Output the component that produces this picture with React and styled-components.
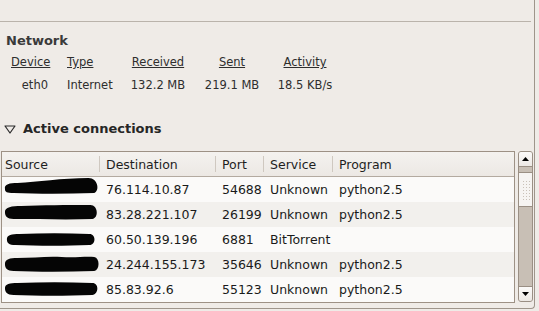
import React from "react";
import styled, { createGlobalStyle } from "styled-components";

const Global = createGlobalStyle`
  html, body { margin: 0; padding: 0; background: #efebe7; }
  body { font-family: "DejaVu Sans", "Noto Sans", sans-serif; color: #1e1e1e; }
`;

const Frame = styled.div`
  width: 535px;
  height: 309px;
  box-sizing: border-box;
  border-right: 1px solid #9e958b;
  border-bottom: 1px solid #9e958b;
  border-bottom-right-radius: 4px;
  display: flex;
  flex-direction: column;
  overflow: hidden;
`;

const Spacer = styled.div`
  height: 21px;
  flex: none;
`;

const Separator = styled.div`
  height: 1px;
  flex: none;
  background: #bab3ab;
  margin-right: 3px;
`;

const Title = styled.div`
  font-size: 13px;
  line-height: 16px;
  font-weight: bold;
  color: #3a3a3a;
  margin: ${(p) => p.$top}px 0 0 6px;
`;

const StatGrid = styled.div`
  display: grid;
  grid-template-columns: 37px 44px 56px 54px 54px;
  column-gap: 19px;
  row-gap: 9px;
  margin: 6px 0 0 11px;
  font-size: 11.5px;
  line-height: 14px;
  color: #2e2e2e;
`;

const StatHead = styled.span`
  text-decoration: underline;
  white-space: nowrap;
  justify-self: ${(p) => p.$align || "center"};
`;

const StatVal = styled.span`
  white-space: nowrap;
  justify-self: ${(p) => p.$align || "center"};
`;

const Expander = styled.div`
  display: flex;
  align-items: center;
  gap: 7px;
  margin: 29px 0 0 4px;
  font-size: 13px;
  line-height: 16px;
  font-weight: bold;
  color: #262626;
`;

const ListArea = styled.div`
  display: flex;
  margin: 14px 0 0 1px;
  gap: 3px;
  height: 152px;
`;

const Tree = styled.div`
  width: 514px;
  box-sizing: border-box;
  border: 1px solid #9d9185;
  background: #faf9f8;
  display: flex;
  flex-direction: column;
`;

const cols = "98px 116px 48px 69px 1fr";

const HeaderRow = styled.div`
  display: grid;
  grid-template-columns: ${cols};
  height: 24px;
  border-bottom: 1px solid #b3aaa0;
  background: linear-gradient(#f4f2ef, #ece8e4);
  font-size: 12.5px;
  color: #1e1e1e;
`;

const HeadCell = styled.div`
  display: flex;
  align-items: center;
  padding-top: 1px;
  padding-left: ${(p) => (p.$first ? 3 : 6)}px;
  position: relative;
  white-space: nowrap;
  ${(p) =>
    p.$divider
      ? `&::after {
    content: "";
    position: absolute;
    right: 0;
    top: 4px;
    bottom: 4px;
    width: 1px;
    background: #cfc8c0;
  }`
      : ""}
`;

const Row = styled.div`
  display: grid;
  grid-template-columns: ${cols};
  height: 25px;
  background: ${(p) => (p.$odd ? "#f2f0ed" : "#fbfaf9")};
  font-size: 12.5px;
  color: #1a1a1a;
`;

const Cell = styled.div`
  display: flex;
  align-items: center;
  padding-left: 6px;
  white-space: nowrap;
  overflow: hidden;
`;

const SourceCell = styled.div`
  padding-left: 2px;
  display: flex;
`;

const Scrollbar = styled.div`
  width: 15px;
  height: 151px;
  box-sizing: border-box;
  border: 1px solid #9a8f84;
  border-radius: 3px;
  background: #c8bfb5;
  display: flex;
  flex-direction: column;
  overflow: hidden;
`;

const ArrowButton = styled.div`
  height: 14px;
  flex: none;
  background: linear-gradient(#fbfaf9, #ece8e4);
  display: flex;
  align-items: center;
  justify-content: center;
  ${(p) => (p.$down ? "border-top: 1px solid #9a8f84;" : "border-bottom: 1px solid #9a8f84;")}
`;

const TroughGap = styled.div`
  height: ${(p) => p.$h}px;
  flex: ${(p) => (p.$grow ? 1 : "none")};
`;

const Thumb = styled.div`
  height: 35px;
  flex: none;
  box-sizing: border-box;
  border-top: 1px solid #9a8f84;
  border-bottom: 1px solid #9a8f84;
  background: #f6f4f2;
  display: flex;
  align-items: center;
  justify-content: center;
`;

const Grip = styled.div`
  width: 8px;
  height: 20px;
  background-image: radial-gradient(circle, #c9c1b8 0.8px, transparent 1px);
  background-size: 3px 3px;
`;

const Arrow = ({ down }) => (
  <svg width="7" height="4" viewBox="0 0 7 4">
    <polygon points={down ? "0,0 7,0 3.5,4" : "0,4 7,4 3.5,0"} fill="#000" />
  </svg>
);

const blobs = [
  "M1 12 C0 7, 6 6, 14 6 C35 5, 60 1, 88 1 C98 1, 100 14, 94 16 C65 17, 35 17, 10 16 C3 16, 1 15, 1 12 Z",
  "M1 10 C1 5, 8 4, 18 4 C40 3, 65 3, 90 3 C98 3, 99 16, 92 17 C65 18, 35 17, 10 17 C3 17, 1 14, 1 10 Z",
  "M3 12 C3 8, 8 7, 16 7 C40 6, 65 6, 89 7 C96 7, 96 18, 89 18 C65 19, 35 19, 12 18 C5 18, 3 16, 3 12 Z",
  "M1 12 C1 7, 6 6, 14 6 C30 6, 45 4, 60 5 C75 6, 85 4, 94 5 C100 6, 100 18, 94 19 C65 20, 35 20, 10 19 C3 19, 1 16, 1 12 Z",
  "M1 11 C1 7, 6 6, 14 6 C40 5, 65 5, 92 6 C99 6, 99 17, 92 18 C65 19, 35 19, 10 18 C3 18, 1 15, 1 11 Z",
];

const Redaction = ({ d }) => (
  <svg width="97" height="25" viewBox="0 0 100 25" preserveAspectRatio="none">
    <path d={d} fill="#050505" />
  </svg>
);

const rows = [
  ["76.114.10.87", "54688", "Unknown", "python2.5"],
  ["83.28.221.107", "26199", "Unknown", "python2.5"],
  ["60.50.139.196", "6881", "BitTorrent", ""],
  ["24.244.155.173", "35646", "Unknown", "python2.5"],
  ["85.83.92.6", "55123", "Unknown", "python2.5"],
];

export default function App() {
  return (
    <>
      <Global />
      <Frame>
        <Spacer />
        <Separator />
        <Title $top={11}>Network</Title>
        <StatGrid>
          <StatHead $align="start">Device</StatHead>
          <StatHead $align="start">Type</StatHead>
          <StatHead>Received</StatHead>
          <StatHead>Sent</StatHead>
          <StatHead>Activity</StatHead>
          <StatVal $align="end">eth0</StatVal>
          <StatVal $align="start">Internet</StatVal>
          <StatVal>132.2 MB</StatVal>
          <StatVal>219.1 MB</StatVal>
          <StatVal>18.5 KB/s</StatVal>
        </StatGrid>
        <Expander>
          <svg width="12" height="9" viewBox="0 0 12 9">
            <polygon points="1,1 11,1 6,8" fill="none" stroke="#2a2a2a" strokeWidth="1.2" strokeLinejoin="round" />
          </svg>
          Active connections
        </Expander>
        <ListArea>
          <Tree>
            <HeaderRow>
              <HeadCell $first $divider>Source</HeadCell>
              <HeadCell $divider>Destination</HeadCell>
              <HeadCell $divider>Port</HeadCell>
              <HeadCell $divider>Service</HeadCell>
              <HeadCell>Program</HeadCell>
            </HeaderRow>
            {rows.map((r, i) => (
              <Row key={i} $odd={i % 2 === 1}>
                <SourceCell>
                  <Redaction d={blobs[i]} />
                </SourceCell>
                <Cell>{r[0]}</Cell>
                <Cell>{r[1]}</Cell>
                <Cell>{r[2]}</Cell>
                <Cell>{r[3]}</Cell>
              </Row>
            ))}
          </Tree>
          <Scrollbar>
            <ArrowButton>
              <Arrow />
            </ArrowButton>
            <TroughGap $h={5} />
            <Thumb>
              <Grip />
            </Thumb>
            <TroughGap $grow />
            <ArrowButton $down>
              <Arrow down />
            </ArrowButton>
          </Scrollbar>
        </ListArea>
      </Frame>
    </>
  );
}
